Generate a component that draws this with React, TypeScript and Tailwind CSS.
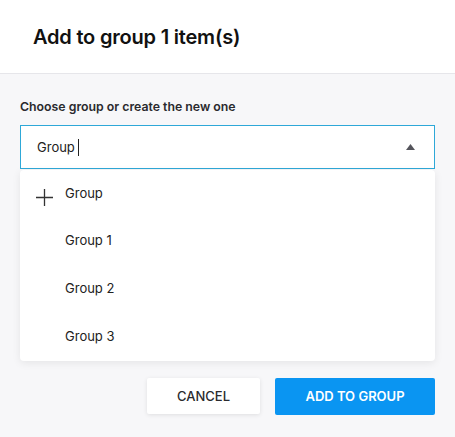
import { useState } from "react";

const groups = ["Group 1", "Group 2", "Group 3"];

export default function App() {
    const [value] = useState("Group ");

    return (
        <div className="w-[455px] h-[437px] flex flex-col bg-[#f7f7f9] font-['Inter',sans-serif] text-[#222]">
            {/* Header */}
            <div className="h-[74px] shrink-0 bg-white border-b border-[#e6e6ea] flex items-center px-[33px]">
                <h1 className="text-[20px] font-semibold tracking-[-0.2px] text-[#111]">Add to group 1 item(s)</h1>
            </div>

            {/* Body */}
            <div className="flex-1 flex flex-col px-5 pt-[27px]">
                <label className="text-[12.3px] font-semibold text-[#2a2a2e] leading-none">
                    Choose group or create the new one
                </label>

                <div className="relative mt-[12px]">
                    <div className="h-[44px] bg-white border border-[#2ea8d8] flex items-center pl-4 pr-[19px]">
                        <span className="text-[13px] text-[#222] whitespace-pre">{value}</span>
                        <span className="w-px h-[17px] bg-[#222]" />
                        <div className="flex-1" />
                        <svg width="9" height="6" viewBox="0 0 9 6">
                            <path d="M4.5 0L9 6H0z" fill="#55555c" />
                        </svg>
                    </div>

                    {/* Dropdown */}
                    <div className="mt-[1px] bg-white rounded-[4px] shadow-[0_2px_8px_rgba(0,0,0,0.08)] pb-px">
                        <div className="h-[46px] flex items-center px-4">
                            <svg width="17" height="17" viewBox="0 0 17 17" className="mt-[8px]">
                                <path d="M8.5 0v17M0 8.5h17" stroke="#333" strokeWidth="1.3" />
                            </svg>
                            <span className="ml-3 text-[13px] text-[#222]">Group</span>
                        </div>
                        {groups.map((g) => (
                            <div key={g} className="h-[48px] flex items-center pl-[45px] text-[13px] text-[#222]">
                                {g}
                            </div>
                        ))}
                    </div>
                </div>

                {/* Footer buttons */}
                <div className="flex justify-end gap-[15px] mt-[17px]">
                    <button className="w-[113px] h-[36px] bg-white rounded-[2px] shadow-[0_1px_4px_rgba(0,0,0,0.1)] text-[13px] font-medium text-[#2a2a2e]">
                        CANCEL
                    </button>
                    <button className="w-[160px] h-[37px] bg-[#0a95f2] rounded-[2px] text-[13px] font-semibold text-white">
                        ADD TO GROUP
                    </button>
                </div>
            </div>
        </div>
    );
}
